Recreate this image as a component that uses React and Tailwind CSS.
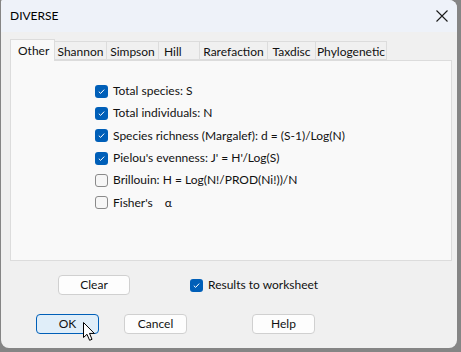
const tabs = [
  { label: "Other", w: "w-[45px]", active: true },
  { label: "Shannon", w: "w-[52px]" },
  { label: "Simpson", w: "w-[52px]" },
  { label: "Hill", w: "w-[41px]", left: true },
  { label: "Rarefaction", w: "w-[68px]" },
  { label: "Taxdisc", w: "w-[48px]" },
  { label: "Phylogenetic", w: "w-[71px]" },
];

const options = [
  { label: "Total species: S", checked: true },
  { label: "Total individuals: N", checked: true },
  { label: "Species richness (Margalef): d = (S-1)/Log(N)", checked: true },
  { label: "Pielou's evenness: J' = H'/Log(S)", checked: true },
  { label: "Brillouin: H = Log(N!/PROD(Ni!))/N", checked: false },
  { label: "Fisher's", extra: "α", checked: false },
];

function Checkbox({ checked }) {
  if (checked) {
    return (
      <span className="w-[13px] h-[13px] rounded-[3px] bg-[#005fb8] flex items-center justify-center flex-shrink-0">
        <svg width="9" height="9" viewBox="0 0 9 9">
          <path d="M1.8 4.7 L3.6 6.4 L7.2 2.6" fill="none" stroke="#fff" strokeWidth="1" />
        </svg>
      </span>
    );
  }
  return (
    <span className="w-[13px] h-[13px] rounded-[3px] bg-[#f6f6f6] border border-[#8a8a8a] flex-shrink-0" />
  );
}

function Button({ children, primary, className = "" }) {
  return (
    <div
      className={`h-[20px] rounded-[4px] border flex items-center justify-center text-[12px] ${
        primary ? "bg-[#e0eef9] border-[#005fb8]" : "bg-[#fdfdfd] border-[#d0d0d0]"
      } ${className}`}
    >
      {children}
    </div>
  );
}

export default function App() {
  return (
    <div className="w-[461px] h-[352px] bg-[#858585] font-['Lato','Noto_Sans',sans-serif] text-[#111]">
      <div className="relative ml-px w-[456px] h-[348px] rounded-t-[8px] rounded-b-[8px] rounded-tl-[2px] bg-[#f0f0f0] overflow-hidden flex flex-col">
        {/* Title bar */}
        <div className="h-[32px] bg-[#eef2f9] flex items-center justify-between pl-[9px] pr-[8px]">
          <span className="text-[12px] text-black">DIVERSE</span>
          <svg width="12" height="12" viewBox="0 0 12 12" className="mr-[1px]">
            <path d="M0.5 0.5 L11.5 11.5 M11.5 0.5 L0.5 11.5" stroke="#1a1a1a" strokeWidth="1.1" />
          </svg>
        </div>

        {/* Tabs */}
        <div className="mt-[7px] ml-[9px] flex items-end relative z-10">
          {tabs.map((t) =>
            t.active ? (
              <div
                key={t.label}
                className={`${t.w} h-[22px] bg-[#f9f9f9] border border-[#dcdcdc] border-b-0 text-[12px] pl-[7px] pt-[2px] -mb-px`}
              >
                {t.label}
              </div>
            ) : (
              <div
                key={t.label}
                className={`${t.w} h-[19px] bg-[#f0f0f0] border border-[#dcdcdc] border-l-0 text-[12px] leading-[18px] pt-[1px] ${
                  t.left ? "pl-[5px]" : "text-center"
                }`}
              >
                {t.label}
              </div>
            )
          )}
        </div>

        {/* Panel */}
        <div className="ml-[9px] w-[442px] h-[201px] bg-[#f9f9f9] border border-[#dcdcdc] pt-[19px] pl-[84px]">
          {options.map((o) => (
            <div key={o.label} className="h-[22.3px] flex items-center gap-[5px] text-[12px]">
              <Checkbox checked={o.checked} />
              <span>{o.label}</span>
              {o.extra && <span className="ml-[7px]">{o.extra}</span>}
            </div>
          ))}
        </div>

        {/* Clear + Results */}
        <div className="mt-[14px] flex items-center">
          <Button className="ml-[57px] w-[72px]">Clear</Button>
          <div className="ml-[60px] flex items-center gap-[5px] text-[12px]">
            <Checkbox checked />
            <span>Results to worksheet</span>
          </div>
        </div>

        {/* OK / Cancel / Help */}
        <div className="mt-[19px] flex items-center">
          <Button primary className="ml-[35px] w-[63px]">OK</Button>
          <Button className="ml-[25px] w-[63px]">Cancel</Button>
          <Button className="ml-[65px] w-[63px]">Help</Button>
        </div>

        {/* Mouse cursor */}
        <svg
          width="14"
          height="21"
          viewBox="0 0 14 21"
          className="absolute left-[82px] top-[322px]"
        >
          <path
            d="M0.5 0.5 L0.5 15.5 L4 12.3 L6.6 18.3 L9 17.3 L6.5 11.4 L11.3 11.4 Z"
            fill="#fff"
            stroke="#000"
            strokeWidth="1"
            strokeLinejoin="round"
          />
        </svg>
      </div>
    </div>
  );
}
